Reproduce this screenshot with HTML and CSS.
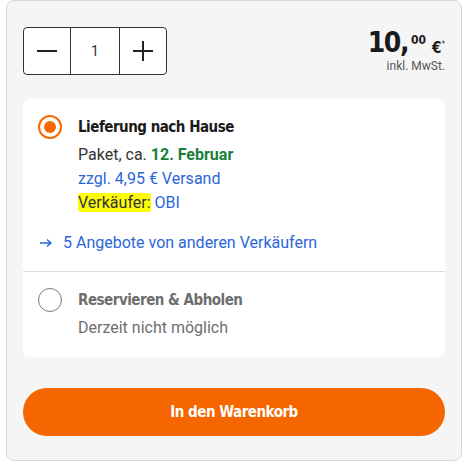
FILE: index.html
```html
<!DOCTYPE html>
<html lang="de">
<head>
<meta charset="utf-8">
<link rel="stylesheet" href="styles.css">
</head>
<body>
<div class="card">
  <div class="top">
    <div class="stepper">
      <div class="cell side">
        <svg width="20" height="20" viewBox="0 0 20 20"><path d="M0 10H20" stroke="#222" stroke-width="2"/></svg>
      </div>
      <div class="cell mid">1</div>
      <div class="cell side">
        <svg width="20" height="20" viewBox="0 0 20 20"><path d="M0 10H20M10 0V20" stroke="#222" stroke-width="2"/></svg>
      </div>
    </div>
    <div class="price">
      <div class="amount"><span class="int">10,</span><span class="dec">00</span><span class="cur">€</span><span class="star">*</span></div>
      <div class="tax">inkl. MwSt.</div>
    </div>
  </div>
  <div class="options">
    <div class="option first">
      <div class="radio on"><span class="dot"></span></div>
      <div class="body">
        <div class="title">Lieferung nach Hause</div>
        <div class="line">Paket, ca. <strong class="date">12. Februar</strong></div>
        <div class="line blue">zzgl. 4,95 € Versand</div>
        <div class="line"><span class="mark">Verkäufer:</span><span class="blue"> OBI</span></div>
      </div>
    </div>
    <div class="offers">
      <svg class="arrow" width="12" height="10" viewBox="0 0 12 10"><path d="M0 5H11M7 1.5L11 5L7 8.5" fill="none" stroke="#2b66d9" stroke-width="1.5"/></svg>
      <span>5 Angebote von anderen Verkäufern</span>
    </div>
    <div class="option second">
      <div class="radio"></div>
      <div class="body">
        <div class="title grey">Reservieren &amp; Abholen</div>
        <div class="line grey">Derzeit nicht möglich</div>
      </div>
    </div>
  </div>
  <button class="cart">In den Warenkorb</button>
</div>
</body>
</html>
```

FILE: styles.css
```css
* { box-sizing: border-box; }
body {
  margin: 0;
  background: #fff;
  font-family: Roboto, "Liberation Sans", sans-serif;
  color: #333;
}
.card {
  margin-left: 6px;
  width: 456px;
  height: 461px;
  background: #f5f5f5;
  border: 1px solid #d8d8d8;
  border-radius: 8px;
  padding: 26px 16px 0;
}
.top {
  display: flex;
  justify-content: space-between;
  align-items: flex-start;
  height: 48px;
  margin-bottom: 24px;
}
.stepper {
  display: flex;
  height: 48px;
  border: 1px solid #333;
  border-radius: 4px;
  background: #fff;
}
.cell {
  display: flex;
  align-items: center;
  justify-content: center;
}
.side { width: 46px; }
.mid {
  width: 50px;
  border-left: 1px solid #333;
  border-right: 1px solid #333;
  font-size: 14px;
  color: #333;
}
.price {
  display: flex;
  flex-direction: column;
  align-items: flex-end;
  margin-top: -10px;
}
.amount {
  font-family: "DejaVu Sans Condensed", "DejaVu Sans", sans-serif;
  font-weight: bold;
  color: #1a1a1a;
  display: flex;
  align-items: flex-start;
  line-height: 1;
}
.int { font-size: 28px; letter-spacing: -1.5px; margin-top: 12px; }
.dec { font-size: 12px; margin-top: 17px; margin-left: 3px; }
.cur { font-size: 15px; margin-top: 24px; margin-left: 6px; }
.star { font-size: 8px; margin-top: 24px; font-weight: normal; }
.tax {
  font-size: 12px;
  color: #555;
  margin-top: 2px;
}
.options {
  background: #fff;
  border-radius: 6px;
}
.option {
  display: flex;
  gap: 16px;
  padding: 16px 15px 0;
}
.radio {
  width: 24px;
  height: 24px;
  flex: none;
  border-radius: 50%;
  border: 1.5px solid #777;
  display: flex;
  align-items: center;
  justify-content: center;
}
.radio.on { border: 2.5px solid #f56a00; }
.dot {
  width: 12px;
  height: 12px;
  border-radius: 50%;
  background: #f56a00;
}
.title {
  font-family: "DejaVu Sans Condensed", "DejaVu Sans", sans-serif;
  font-weight: bold;
  font-size: 15px;
  letter-spacing: -0.5px;
  line-height: 24px;
  color: #1a1a1a;
  margin-bottom: 4px;
}
.line {
  font-size: 16px;
  line-height: 24px;
}
.date { color: #16803a; font-weight: bold; }
.blue { color: #2b66d9; }
.mark { background: #fdfd0a; border-radius: 3px; }
.grey { color: #6e6e6e; }
.offers {
  display: flex;
  align-items: center;
  gap: 11px;
  padding: 16px 17px;
  font-size: 16px;
  line-height: 24px;
  color: #2b66d9;
  border-bottom: 1px solid #dcdcdc;
}
.second { padding-top: 16px; padding-bottom: 17px; }
.cart {
  display: block;
  width: 100%;
  height: 48px;
  margin-top: 31px;
  border: none;
  border-radius: 24px;
  background: #f56600;
  color: #fff;
  font-family: "DejaVu Sans Condensed", "DejaVu Sans", sans-serif;
  font-weight: bold;
  font-size: 15px;
  letter-spacing: -0.5px;
}
```
